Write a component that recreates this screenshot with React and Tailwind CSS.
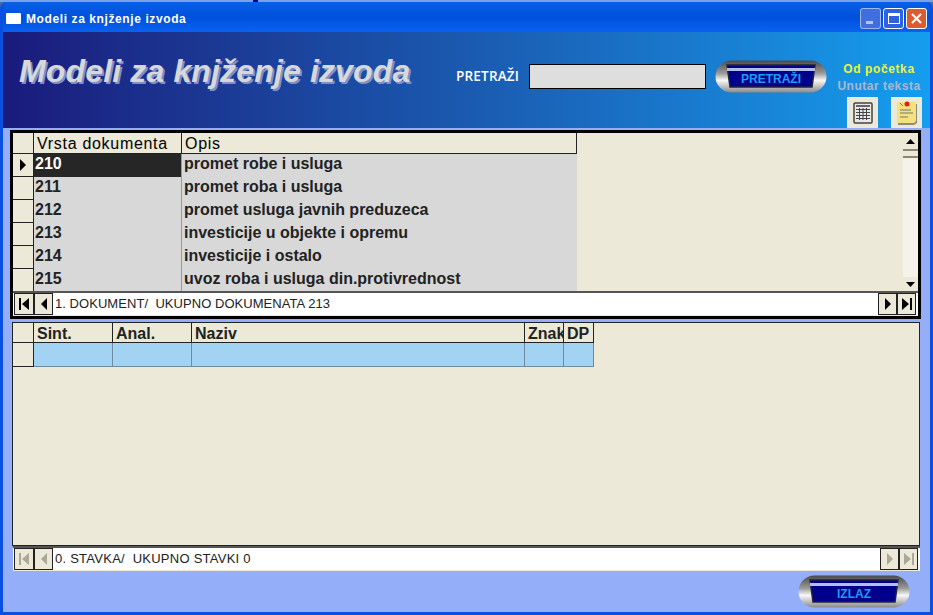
const FONT = "font-['Liberation_Sans',Arial,sans-serif]"

const DOCS = [
  ['210', 'promet robe i usluga'],
  ['211', 'promet roba i usluga'],
  ['212', 'promet usluga javnih preduzeca'],
  ['213', 'investicije u objekte i opremu'],
  ['214', 'investicije i ostalo'],
  ['215', 'uvoz roba i usluga din.protivrednost'],
]

const First = ({ color }) => (
  <svg width="12" height="14" viewBox="0 0 12 14"><path d="M1 1h2v12H1z M11 1v12L4 7z" fill={color} /></svg>
)
const Prev = ({ color }) => (
  <svg width="12" height="14" viewBox="0 0 12 14"><path d="M9 1v12L3 7z" fill={color} /></svg>
)
const Next = ({ color }) => (
  <svg width="12" height="14" viewBox="0 0 12 14"><path d="M3 1v12l6-6z" fill={color} /></svg>
)
const Last = ({ color }) => (
  <svg width="12" height="14" viewBox="0 0 12 14"><path d="M1 1v12l7-6z M9 1h2v12H9z" fill={color} /></svg>
)

const NavBtn = ({ children, w }) => (
  <div className={`${w} h-[22px] shrink-0 flex items-center justify-center bg-[#ece9d8] border border-[#222]`}>
    {children}
  </div>
)

const NavBar = ({ text, color, spacing }) => (
  <div className="h-[25px] flex items-stretch bg-white border-t-2 border-[#555] border-b border-b-[#ece9d8]">
    <div className="flex pl-[1px]">
      <NavBtn w="w-[20px]"><First color={color} /></NavBtn>
      <NavBtn w="w-[19px]"><Prev color={color} /></NavBtn>
    </div>
    <div className={`flex-1 pl-[2px] text-[13px] leading-[22px] text-[#222] ${spacing} whitespace-pre`}>{text}</div>
    <div className="flex pr-[2px]">
      <NavBtn w="w-[19px]"><Next color={color} /></NavBtn>
      <NavBtn w="w-[19px]"><Last color={color} /></NavBtn>
    </div>
  </div>
)

const PillButton = ({ label, w }) => (
  <div className={`relative ${w} h-[33px] shrink-0`}>
    <svg className="absolute inset-0 w-full h-full" viewBox="0 0 112 33" preserveAspectRatio="none">
      <defs>
        <linearGradient id="silver" x1="0" y1="0" x2="0" y2="1">
          <stop offset="0" stopColor="#4a4a4a" />
          <stop offset="0.4" stopColor="#9a9a9a" />
          <stop offset="0.62" stopColor="#f8f8f8" />
          <stop offset="1" stopColor="#8a8a8a" />
        </linearGradient>
      </defs>
      <rect x="0.5" y="0.5" width="111" height="32" rx="16" fill="url(#silver)" />
      <path d="M12 5h88l-3 22H15z" fill="#00008c" stroke="#23233a" strokeWidth="1.5" />
      <rect x="12" y="8" width="88" height="3" fill="#b4bce8" />
    </svg>
    <span className="absolute inset-0 flex items-center justify-center pt-[5px] text-[12px] font-bold text-[#1e9cf4]">{label}</span>
  </div>
)

const CalcIcon = () => (
  <svg width="20" height="22" viewBox="0 0 20 22">
    <rect x="1" y="1" width="18" height="20" rx="1" fill="#e8e8e8" stroke="#444" strokeWidth="1.5" />
    <rect x="3" y="3" width="14" height="2" fill="#666" />
    <path d="M3 7.5h14M3 10.5h14M3 13.5h14M3 16.5h14M6.5 6v12M10 6v12M13.5 6v12" stroke="#444" strokeWidth="1" />
  </svg>
)

const NoteIcon = () => (
  <svg width="24" height="26" viewBox="0 0 24 26">
    <path d="M3 4h19v19l-3 2H3z" fill="#8c8c80" />
    <path d="M2 2h19v19l-2 2H2z" fill="#f6e27c" />
    <circle cx="12" cy="4" r="2.5" fill="#e02020" />
    <path d="M5 3l3 3" stroke="#777" strokeWidth="1" />
    <path d="M5 10h11M5 13h13M5 17h8" stroke="#777" strokeWidth="1" />
  </svg>
)

const HeadCell = ({ w, children }) => (
  <div className={`${w} shrink-0 border-r border-b border-[#222] pl-[3px] overflow-hidden whitespace-nowrap`}>{children}</div>
)

const COLS = ['w-[79px]', 'w-[79px]', 'w-[333px]', 'w-[39px]', 'w-[30px]']

const App = () => {
  return (
    <div className={`${FONT} w-[933px] h-[615px] overflow-hidden flex flex-col bg-[#3a6ea5]`}>
      <div className="h-[2px] flex bg-[#7ba2e7]">
        <div className="w-[5px] h-[2px] bg-[#000080] ml-[253px]"></div>
      </div>
      <div className="flex-1 flex flex-col rounded-t-[7px] overflow-hidden bg-[#0055e5] border-x-[3px] border-b-[3px] border-[#0a50e0]">
        {/* title bar */}
        <div className="h-[30px] shrink-0 flex items-center -mx-[3px] pl-[6px] pr-[6px] pt-[3px] bg-gradient-to-b from-[#0a5fe8] via-[#0050dc] to-[#0a62f0]">
          <div className="w-[15px] h-[11px] bg-white rounded-[1px] mr-[5px]"></div>
          <span className="text-[12px] font-bold text-white tracking-[0.6px]">Modeli za knjženje izvoda</span>
          <div className="ml-auto flex gap-[2px]">
            <div className="w-[21px] h-[21px] rounded-[3px] border border-white/50 bg-[#3f6fdc] flex items-end pl-[5px] pb-[4px]">
              <div className="w-[7px] h-[3px] bg-white/60"></div>
            </div>
            <div className="w-[21px] h-[21px] rounded-[3px] border border-white bg-[#2f62e0] flex items-center justify-center">
              <div className="w-[12px] h-[11px] border border-t-[3px] border-white"></div>
            </div>
            <div className="w-[21px] h-[21px] rounded-[3px] border border-white bg-[#de5a30] flex items-center justify-center">
              <svg width="13" height="13" viewBox="0 0 13 13"><path d="M2 2l9 9M11 2l-9 9" stroke="#fff" strokeWidth="2.2" /></svg>
            </div>
          </div>
        </div>

        {/* header */}
        <div className="h-[96px] shrink-0 flex bg-gradient-to-r from-[#1a1a7c] via-[#1a5ab0] to-[#159dee]">
          <h1 className="w-[445px] shrink-0 pl-[16px] pt-[20px] text-[32px] leading-[38px] tracking-[0.15px] font-bold italic text-[#d8d8d8] whitespace-nowrap [text-shadow:2px_2px_0_#7f90c8]">
            Modeli za knjženje izvoda
          </h1>
          <div className="flex items-start pt-[29px]">
            <span className="w-[73px] pl-[8px] text-[13.5px] leading-[30px] tracking-[0.2px] text-white font-['Open_Sans',sans-serif] font-semibold whitespace-nowrap">PRETRAŽI</span>
            <div className="w-[177px] h-[25px] mt-[3px] ml-[8px] bg-[#dedede] border border-black"></div>
            <div className="ml-[9px] -mt-[1px]"><PillButton label="PRETRAŽI" w="w-[112px]" /></div>
          </div>
          <div className="ml-auto w-[90px] flex flex-col pt-[29px]">
            <span className="text-[12px] leading-[16px] font-bold text-[#ecf43c] tracking-[0.6px] whitespace-nowrap self-center -ml-[12px]">Od početka</span>
            <span className="mt-[1px] text-[12px] leading-[16px] font-bold text-[#a8b8d0] tracking-[0.5px] whitespace-nowrap self-center -ml-[12px]">Unutar teksta</span>
            <div className="flex gap-[13px] mt-auto pl-[7px]">
              <div className="w-[31px] h-[31px] bg-[#ece9d8] flex items-center justify-center"><CalcIcon /></div>
              <div className="w-[31px] h-[31px] bg-[#ece9d8] flex items-center justify-center"><NoteIcon /></div>
            </div>
          </div>
        </div>

        {/* body */}
        <div className="flex-1 flex flex-col bg-[#94aefa] pt-[2px] pl-[7px] pr-[9px]">
          <div className="h-[189px] shrink-0 border-[3px] border-black bg-[#ece9d8] flex flex-col">
            <div className="flex-1 flex min-h-0">
              <div className="w-[564px] shrink-0 text-[16px] font-bold text-[#222]">
                <div className="h-[21px] flex leading-[21px] font-normal text-black tracking-[0.7px]">
                  <div className="w-[21px] shrink-0 border-r border-b border-[#222]"></div>
                  <HeadCell w="w-[148px]">Vrsta dokumenta</HeadCell>
                  <HeadCell w="w-[395px]">Opis</HeadCell>
                </div>
                {DOCS.map(([code, name], i) => (
                  <div key={code} className="h-[23px] flex leading-[20px]">
                    <div className="w-[21px] shrink-0 border-r border-b border-[#222] flex items-center justify-center">
                      {i === 0 && <svg width="8" height="12" viewBox="0 0 8 12"><path d="M1 0v12l6-6z" fill="#000" /></svg>}
                    </div>
                    <div className={`w-[148px] shrink-0 pl-[1px] border-r border-[#999] ${i === 0 ? 'bg-[#262626] text-white' : 'bg-[#d8d8d8]'}`}>{code}</div>
                    <div className="w-[395px] shrink-0 pl-[2px] bg-[#d8d8d8] whitespace-nowrap">{name}</div>
                  </div>
                ))}
              </div>
              <div className="flex-1"></div>
              <div className="w-[15px] shrink-0 flex flex-col bg-[#f4f2ea]">
                <div className="h-[16px] bg-[#ece9d8] flex items-center justify-center">
                  <svg width="9" height="5" viewBox="0 0 9 5"><path d="M0 5h9L4.500 0z" fill="#000" /></svg>
                </div>
                <div className="h-[9px] bg-[#ece9d8] border-y-2 border-[#8a8878]"></div>
                <div className="flex-1"></div>
                <div className="h-[14px] bg-[#ece9d8] flex items-center justify-center">
                  <svg width="9" height="5" viewBox="0 0 9 5"><path d="M0 0h9L4.500 5z" fill="#000" /></svg>
                </div>
              </div>
            </div>
            <NavBar text="1. DOKUMENT/  UKUPNO DOKUMENATA 213" color="#000" spacing="tracking-[0.05px]" />
          </div>

          <div className="h-[224px] shrink-0 mt-[3px] ml-[2px] mr-[1px] border border-[#222] bg-[#ece9d8] text-[16px] font-bold text-[#222]">
            <div className="h-[20px] flex leading-[21px]">
              <div className="w-[21px] shrink-0 border-r border-b border-[#222]"></div>
              <HeadCell w={COLS[0]}>Sint.</HeadCell>
              <HeadCell w={COLS[1]}>Anal.</HeadCell>
              <HeadCell w={COLS[2]}>Naziv</HeadCell>
              <HeadCell w={COLS[3]}>Znak</HeadCell>
              <HeadCell w={COLS[4]}>DP</HeadCell>
            </div>
            <div className="h-[24px] flex">
              <div className="w-[21px] shrink-0 border-r border-b border-[#222]"></div>
              {COLS.map((w, i) => (
                <div key={i} className={`${w} shrink-0 bg-[#a3d3f2] border-r border-b border-[#6e8aa0]`}></div>
              ))}
            </div>
          </div>
          <div className="ml-[3px] mr-[1px]">
            <NavBar text="0. STAVKA/  UKUPNO STAVKI 0" color="#aca899" spacing="tracking-[0.25px]" />
          </div>
          <div className="flex justify-end mt-[4px] pr-[11px]">
            <PillButton label="IZLAZ" w="w-[112px]" />
          </div>
        </div>
      </div>
    </div>
  )
}

export default App
